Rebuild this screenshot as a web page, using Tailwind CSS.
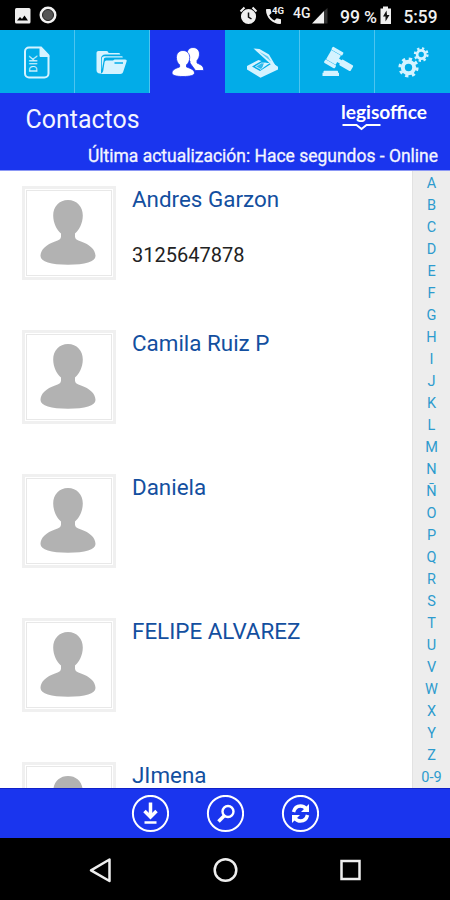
<!DOCTYPE html>
<html lang="es">

<head>
    <meta charset="UTF-8">
    <meta name="viewport" content="width=device-width, initial-scale=1.0">
    <title>Contactos</title>
    <script src="https://cdn.jsdelivr.net/npm/@tailwindcss/browser@4"></script>
</head>

<body class="bg-black font-[Roboto,sans-serif]">
    <template id="_t-contact">
        <article class="flex flex-row h-36 shrink-0 items-start gap-4 pl-[22px] pt-[15px]">
            <div class="w-[94px] h-[94px] shrink-0 border-3 border-[#f0f0f0] p-px">
                <div class="w-full h-full border border-[#e8e8e8] bg-white">
                    <svg viewBox="0 0 84 84" class="w-full h-full" fill="#b2b2b2">
                        <path d="M41 9c-8.800 0-14.800 6.500-14.800 15.500 0 7.500 3.500 14.500 7.800 18v3c0 2.500-2 3.600-6 5C19.500 53.500 13.500 58.500 13.500 65c0 5.800 10.500 8.700 27.500 8.700S68.500 70.800 68.500 65c0-6.500-6-11.500-14.500-14.500-4-1.400-6-2.500-6-5v-3c4.300-3.500 7.800-10.500 7.800-18C55.800 15.500 49.800 9 41 9z" />
                    </svg>
                </div>
            </div>
            <div class="flex flex-col">
                <p id="_name" class="text-[22.4px] leading-[26px] text-[#134f9f]"></p>
                <p id="_phone" class="text-[20px] leading-6 mt-[31px] text-[#222222]"></p>
            </div>
        </article>
    </template>

    <main class="flex flex-col w-[450px] h-[900px] overflow-hidden">
        <!-- status bar -->
        <div class="flex flex-row h-[30px] shrink-0 items-center justify-between pl-[14px] pr-[8px] bg-black text-white">
            <div class="flex flex-row items-center gap-2">
                <svg width="17" height="17" viewBox="0 0 17 17">
                    <rect x="1" y="1" width="15.500" height="15.500" rx="1.500" fill="#eeeeee" />
                    <path d="M3 13.500l3-3.500 2 2 2.500-3.500 3.500 5z" fill="#000" />
                </svg>
                <svg width="18" height="18" viewBox="0 0 18 18">
                    <circle cx="9" cy="9" r="8.500" fill="#f2f2f2" />
                    <circle cx="9" cy="9" r="5.500" fill="#555" stroke="#222" />
                </svg>
            </div>
            <svg width="203" height="30" viewBox="239 0 203 30" fill="#f0f0f0" class="font-medium">
                <circle cx="248.500" cy="16.500" r="6.800" stroke="#f0f0f0" stroke-width="1.500" />
                <path d="M240.500 11.500l4-4M256.500 11.500l-4-4" stroke="#f0f0f0" stroke-width="2" />
                <path d="M248.500 12.500v4.500l3 2" fill="none" stroke="#111" stroke-width="1.500" />
                <path d="M267 9h3.500l1 4-2.300 2.200c1.300 2.500 2.800 4 5.300 5.200l2.200-2.200 4.300 1v3.800c0 .6-.5 1-1 1C272.500 24 266 17.500 266 10c0-.6.400-1 1-1z" />
                <text x="272" y="14" font-size="9" font-weight="700" textLength="12" lengthAdjust="spacingAndGlyphs">4G</text>
                <text x="293" y="18" font-size="14" textLength="17.500" lengthAdjust="spacingAndGlyphs">4G</text>
                <path d="M312 23.500L324 11v12.500z" />
                <path d="M324 11l3.500-3v15.500H324z" fill="#333" />
                <text x="340" y="22.500" font-size="18.500" textLength="20" lengthAdjust="spacingAndGlyphs">99</text>
                <text x="364" y="22.500" font-size="17" textLength="13" lengthAdjust="spacingAndGlyphs">%</text>
                <path d="M380.500 8.500h2.500V6.500h5v2h3V24h-10.500z" />
                <path d="M386.500 10.500l-3.500 6h2.500v5l4-6.500H387z" fill="#111" />
                <text x="403.500" y="22.500" font-size="18.500" textLength="34" lengthAdjust="spacingAndGlyphs">5:59</text>
            </svg>
        </div>

        <!-- tabs -->
        <nav class="grid grid-cols-6 h-[64px] shrink-0 bg-[#1a35ee] *:flex *:items-center *:justify-center *:h-[63px]">
            <button class="bg-[#02ace8] border-r border-[#4cc4ef]">
                <svg width="40" height="40" viewBox="0 0 40 40" fill="none" stroke="#d5f3ff">
                    <path d="M12 5.500h12l7.500 8V31.500a4 4 0 0 1-4 4h-15.500a4 4 0 0 1-4-4V9.500a4 4 0 0 1 4-4z" stroke-width="2" />
                    <path d="M23 5v9.500h9z" fill="#d5f3ff" />
                    <text transform="translate(19.500 30.500) rotate(-90)" font-size="10" fill="#d5f3ff" stroke="#d5f3ff" stroke-width=".1" textLength="17" lengthAdjust="spacingAndGlyphs">DIK</text>
                </svg>
            </button>
            <button class="bg-[#02ace8] border-r border-[#4cc4ef]">
                <svg width="40" height="40" viewBox="0 0 40 40" fill="#d5f3ff">
                    <path d="M4.500 11c0-1.200.8-2 2-2h8c1 0 2 .8 2 2h10c1 0 1.800.700 1.800 1.500H13.500c-3 0-4.500 2-4.500 4v15C6 32 4.500 30.500 4.500 28z" />
                    <path d="M9.800 28V17c0-1.600 1-2.700 2.700-2.700h17c.8 0 1.300.5 1.300 1.200H14c-1.500 0-2.200.8-2.200 2.200z" />
                    <path d="M12.500 20.500c.3-1.500 1-2 2.500-2h6l1.500-1h10.500c1.500 0 2 .8 1.500 2.300l-3.300 10c-.5 1.600-1.500 2.200-3 2.200H8c1.800-.5 2.700-1.500 3.200-3z" />
                    <path d="M22.500 21h8.500" stroke="#02ace8" stroke-width="1.500" />
                </svg>
            </button>
            <button class="bg-[#1a35ee]">
                <svg width="40" height="40" viewBox="0 0 40 40" fill="#fff" stroke="#1a35ee" stroke-width=".8">
                    <path d="M25 5.500c-3.700 0-6 3-6 6.500 0 3 1.200 5.500 3 7v2l5.500 7.500H35.500c.6-4-1.800-5.500-6.500-7.500v-2.500c1.500-1.500 2.500-4 2.500-6.500C31.500 8.500 29 5.500 25 5.500z" />
                    <path d="M15 8.500c-4 0-6.600 3-6.600 7 0 3.200 1.300 5.800 3.200 7.300v2.200C7 26.500 4 28 4 31c0 2.500 4.500 3.500 11 3.500S26.500 33.500 26.500 31c0-3-3.500-4.500-8-6v-2.200c1.900-1.500 3.200-4.100 3.200-7.300 0-4-2.700-7-6.700-7z" />
                </svg>
            </button>
            <button class="bg-[#02ace8] border-r border-[#4cc4ef]">
                <svg width="40" height="40" viewBox="0 0 40 40" fill="#d5f3ff">
                    <path d="M11.500 6.500l6 .5 9.500 5.500 7 12-6-3z" />
                    <path d="M17 9.500l9 5 3 5z" fill="#5ccdf3" />
                    <path d="M5 24l11.500-6 3 1-9.500 5.500 8 4.500 11-7-3-4 10 6.800v2.700L18.500 35.800 5 27.500z" />
                    <path d="M13.500 24.500l6-3.500h5l-5.500 6.500z" fill="#2fbbed" stroke="#d5f3ff" stroke-width=".8" />
                    <path d="M22 21h6l-8 5.500z" />
                </svg>
            </button>
            <button class="bg-[#02ace8] border-r border-[#4cc4ef]">
                <svg width="40" height="40" viewBox="0 0 40 40" fill="#d5f3ff">
                    <g transform="translate(15.700 15.800) rotate(30)">
                        <rect x="-5.500" y="-10" width="12.500" height="3.600" rx="1" />
                        <rect x="-5" y="-6" width="11" height="10.500" />
                        <rect x="-5.500" y="4.900" width="12.500" height="3.600" rx="1" />
                        <rect x="5" y="-2.500" width="5" height="4" />
                        <rect x="9" y="-3.500" width="13" height="6.500" rx="1" />
                    </g>
                    <path d="M7.500 28.700h12.500c.6 0 1 .4 1 1v1h1v3.300H5.500v-3.300h1v-1c0-.6.400-1 1-1z" />
                </svg>
            </button>
            <button class="bg-[#02ace8]">
                <svg width="40" height="40" viewBox="0 0 40 40" fill="none" stroke="#d5f3ff">
                    <circle cx="15.500" cy="25.500" r="5.700" stroke-width="4" />
                    <circle cx="15.500" cy="25.500" r="8.500" stroke-width="3.200" stroke-dasharray="3.200 3.476" />
                    <circle cx="28.200" cy="12.500" r="4.100" stroke-width="2.800" />
                    <circle cx="28.200" cy="12.500" r="6.200" stroke-width="2.400" stroke-dasharray="2.300 2.570" />
                </svg>
            </button>
        </nav>

        <!-- title -->
        <header class="flex flex-col h-[77px] shrink-0 bg-[#1a35ee] text-white border-b border-[#8c98f5]">
            <div class="flex flex-row justify-between items-start h-[50px] pl-[26px] pr-[17px]">
                <h1 class="mt-[9px]">
                    <svg width="120" height="32" fill="#f4f5ff"><text x="-.5" y="25" font-size="25" textLength="114" lengthAdjust="spacingAndGlyphs">Contactos</text></svg>
                </h1>
                <svg width="96" height="34" viewBox="337 99 96 34" fill="#fff" class="mt-[5px] font-[Lato,sans-serif] font-bold">
                    <text x="341" y="119" font-size="18.500" textLength="86" lengthAdjust="spacingAndGlyphs">legisoffice</text>
                    <path d="M342.500 125h14l5 4 5-4h14" fill="none" stroke="#fff" stroke-width="2" />
                </svg>
            </div>
            <svg width="450" height="25" fill="#f4f5ff" stroke="#f4f5ff" stroke-width=".3">
                <text x="88" y="18" font-size="18" textLength="350" lengthAdjust="spacingAndGlyphs">Última actualización: Hace segundos - Online</text>
            </svg>
        </header>

        <div class="flex flex-row h-[617px] shrink-0 bg-white">
            <section id="contacts" class="flex flex-col flex-1 h-full overflow-hidden"></section>
            <aside id="letters" class="flex flex-col w-[38px] pt-[1.5px] bg-[#ededed] border-l border-[#e2e2e2] overflow-hidden text-center text-[14.500px] text-[#2d9bce] *:h-[22.040px] *:leading-[22px] *:shrink-0"></aside>
        </div>

        <!-- actions -->
        <menu class="flex flex-row h-[50px] shrink-0 items-center justify-center gap-[37px] bg-[#1a35ee] border-t border-[#1020c8]">
            <svg width="38" height="38" viewBox="0 0 38 38" fill="none" stroke="#fff">
                <circle cx="19.500" cy="18.500" r="17.600" stroke-width="2" />
                <path d="M19.500 7.500v14" stroke-width="3.500" />
                <path d="M13.500 16l6 6 6-6" stroke-width="3.500" />
                <path d="M13.500 27.500h12" stroke-width="2.500" />
            </svg>
            <svg width="38" height="38" viewBox="0 0 38 38" fill="none" stroke="#fff">
                <circle cx="19.500" cy="18.500" r="17.600" stroke-width="2" />
                <circle cx="22" cy="16.500" r="5.500" stroke-width="2.400" />
                <path d="M18 21L12.500 26.500" stroke-width="3.500" />
            </svg>
            <svg width="38" height="38" viewBox="0 0 38 38" fill="none" stroke="#fff">
                <circle cx="19.500" cy="18.500" r="17.600" stroke-width="2" />
                <path d="M12.500 17c1-4 3.500-6 7-6 2.200 0 4 .8 5.500 2.500M26.500 20c-1 4-3.500 6-7 6-2.200 0-4-.8-5.500-2.500" stroke-width="3.500" />
                <path d="M28 9v8h-8zM11 28v-8h8z" fill="#fff" stroke="none" />
            </svg>
        </menu>

        <!-- system navigation -->
        <footer class="flex flex-row flex-1 items-center justify-center gap-[95px] pt-[2px] bg-black">
            <svg width="30" height="30" viewBox="0 0 30 30" fill="none" stroke="#eeeeee" stroke-width="2.500" stroke-linejoin="round">
                <path d="M24.500 4.500v21.500L6 15.300z" />
            </svg>
            <svg width="30" height="30" viewBox="0 0 30 30" fill="none" stroke="#eeeeee" stroke-width="2.500">
                <circle cx="15.500" cy="15" r="10.800" />
            </svg>
            <svg width="30" height="30" viewBox="0 0 30 30" fill="none" stroke="#eeeeee" stroke-width="2.500">
                <rect x="6.500" y="6" width="18" height="18" />
            </svg>
        </footer>
    </main>

    <script>
        const CONTACTS = [
            { name: 'Andres Garzon', phone: '3125647878' },
            { name: 'Camila Ruiz P', phone: '' },
            { name: 'Daniela', phone: '' },
            { name: 'FELIPE ALVAREZ', phone: '' },
            { name: 'JImena', phone: '' },
        ];

        const _contacts = document.getElementById("contacts");
        const _letters = document.getElementById("letters");
        const _tContact = document.getElementById("_t-contact");

        CONTACTS.forEach(e => {
            const t = _tContact.content.cloneNode(true);
            t.querySelector("#_name").textContent = e.name;
            t.querySelector("#_phone").textContent = e.phone;
            _contacts.appendChild(t);
        });

        [...'ABCDEFGHIJKLMNÑOPQRSTUVWXYZ', '0-9'].forEach(e => {
            const a = document.createElement("a");
            a.textContent = e;
            _letters.appendChild(a);
        });
    </script>
</body>

</html>
